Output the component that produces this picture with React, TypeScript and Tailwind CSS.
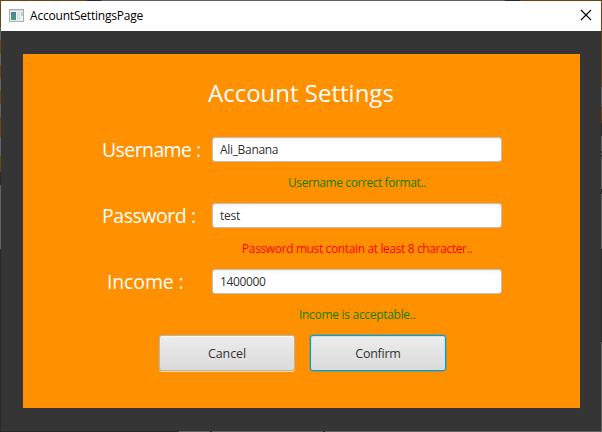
import type { ReactNode } from "react";

const fieldClass =
  "block h-[25px] w-[290px] rounded-[3px] border border-[#c3c0bc] bg-[linear-gradient(#f2f2f2,#ffffff_4px)] px-[7px] font-['Open_Sans','Noto_Sans',sans-serif] text-[12px] leading-[23px] text-[#323232] outline-none";

function Row({
  label,
  labelClass,
  value,
  spacing,
  children,
}: {
  label: string;
  labelClass: string;
  value: string;
  spacing: string;
  children: ReactNode;
}) {
  return (
    <div className="h-[66px]">
      <div className="flex h-[25px] items-center">
        <label className={`w-[189px] shrink-0 whitespace-nowrap text-[19.5px] leading-[25px] text-white ${labelClass}`}>
          {label}
        </label>
        <input className={`${fieldClass} ${spacing}`} defaultValue={value} aria-label={label} />
      </div>
      <div className="mt-[12px] whitespace-nowrap text-[12px] leading-[17px]">{children}</div>
    </div>
  );
}

export default function App() {
  return (
    <div className="grid h-[432px] w-[602px] grid-cols-[1px_600px_1px] grid-rows-[1px_430px_1px] overflow-hidden bg-[#353535] font-['Open_Sans','Noto_Sans',sans-serif]">
      <div className="col-span-3 bg-[linear-gradient(90deg,#6c4412_87px,#29292b_87px_101px,#616161_101px_505px,#29292b_505px_520px,#6c4412_520px)]" />
      <div className="bg-[linear-gradient(#6c4412_26px,#616161_26px_39px,#6c4412_39px_52px,#616161_52px_64px,#6c4412_64px_77px,#616161_77px_90px,#6c4412_90px_103px,#616161_103px_116px,#6c4412_116px_136px,#616161_136px_155px,#6c4412_155px_171px,#29292b_171px_184px,#616161_184px_248px,#29292b_248px)]" />
      <div className="flex flex-col">
        <header className="flex h-[30px] items-center bg-white">
          <svg className="mb-[2px] ml-[8px] shrink-0" width="15" height="13" viewBox="0 0 15 13" shapeRendering="crispEdges">
            <rect width="15" height="13" fill="#a9aeb3" />
            <rect x="1" y="1" width="13" height="1" fill="#d4d9de" />
            <rect x="1" y="2" width="13" height="10" fill="#eef0f3" />
            <rect x="2" y="3" width="5" height="8" fill="#4f7fa0" />
            <rect x="2" y="6" width="5" height="5" fill="#4b9384" />
            <rect x="8" y="3" width="3" height="8" fill="#dfe2ea" />
            <rect x="12" y="3" width="2" height="4" fill="#b3d8c0" />
          </svg>
          <h1 className="ml-[6px] whitespace-nowrap text-[12px] leading-[16px] tracking-[-0.2px] text-black">
            AccountSettingsPage
          </h1>
          <button className="mr-[9px] mb-[2px] ml-auto" aria-label="Close">
            <svg width="12" height="12" viewBox="0 0 12 12" className="block">
              <path d="M1 1L11 11M11 1L1 11" stroke="#000" strokeWidth="1.1" />
            </svg>
          </button>
        </header>
        <main className="ml-[22px] mt-[23px] h-[354px] w-[557px] bg-[#ff9100]">
          <h2 className="ml-[185px] pt-[22px] whitespace-nowrap text-[24px] leading-[33px] text-white">Account Settings</h2>
          <form className="mt-[28px]">
            <Row label="Username :" labelClass="pl-[79px] tracking-[-0.6px]" value="Ali_Banana" spacing="tracking-[-0.32px]">
              <p className="pl-[265px] tracking-[-0.42px] text-[#128000]">Username correct format..</p>
            </Row>
            <Row label="Password :" labelClass="pl-[79px] tracking-[-0.45px]" value="test" spacing="tracking-[-0.25px]">
              <p className="pl-[219px] tracking-[-0.37px] text-[#ff0000]">Password must contain at least 8 character..</p>
            </Row>
            <Row label="Income :" labelClass="pl-[84px] tracking-[-0.15px]" value="1400000" spacing="tracking-[-0.35px]">
              <p className="pl-[276px] tracking-[-0.3px] text-[#128000]">Income is acceptable..</p>
            </Row>
            <div className="ml-[136px] flex gap-[15px] text-[12.5px] text-[#323232]">
              <button
                type="button"
                className="h-[36px] w-[136px] rounded-[3px] border border-[#b6b5b2] bg-[linear-gradient(#ededed,#dadada)] pt-[2px] tracking-[-0.1px] shadow-[inset_0_1px_0_#f8f8f8,0_1px_0_#ffd28d]"
              >
                Cancel
              </button>
              <button
                type="button"
                className="h-[36px] w-[136px] rounded-[3px] border border-[#039ed3] bg-[linear-gradient(#ededed,#dadada)] pt-[2px] tracking-[-0.25px] shadow-[inset_0_0_0_1px_#cbe0e7,0_0_0_1px_#a6944a]"
              >
                Confirm
              </button>
            </div>
          </form>
        </main>
      </div>
      <div className="bg-[linear-gradient(#6c4412_86px,#616161_86px_106px,#6c4412_106px_122px,#29292b_122px_135px,#616161_135px_150px,#29292b_150px_152px,#616161_152px_154px,#29292b_154px_156px,#616161_156px_188px,#29292b_188px_193px,#616161_193px_248px,#29292b_248px_341px,#616161_341px)]" />
      <div className="col-span-3 bg-[linear-gradient(90deg,#29292b_179px,#616161_179px_210px,#29292b_210px_212px,#616161_212px_323px,#29292b_323px_325px,#616161_325px)]" />
    </div>
  );
}
